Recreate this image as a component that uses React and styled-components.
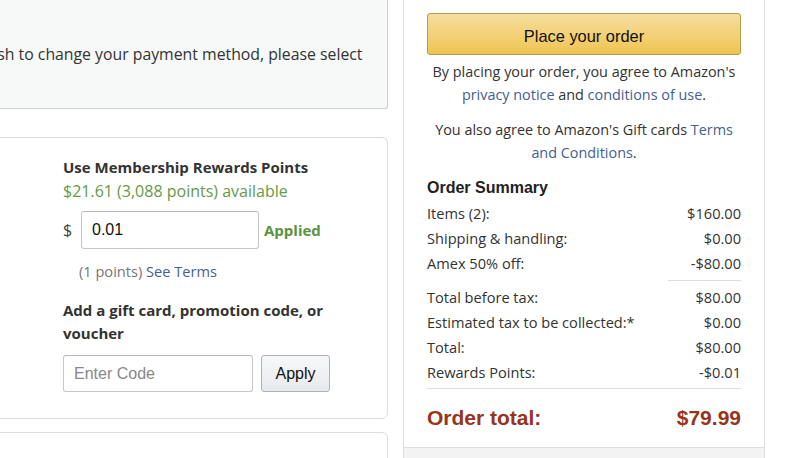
import styled, { createGlobalStyle } from 'styled-components';

const GlobalStyle = createGlobalStyle`
  html, body {
    margin: 0;
    padding: 0;
    background: #fff;
    overflow: hidden;
  }
  body {
    font-family: 'Open Sans', 'Liberation Sans', sans-serif;
    color: #333;
  }
`;

const Page = styled.div`
  display: flex;
  align-items: flex-start;
  gap: 15px;
  width: 785px;
  height: 458px;
  overflow: hidden;
`;

const LeftColumn = styled.div`
  display: flex;
  flex-direction: column;
  width: 448px;
  margin-left: -60px;
  flex-shrink: 0;
`;

const NoticeBox = styled.div`
  height: 108px;
  display: flex;
  align-items: center;
  background: #f7f8f8;
  border: 1px solid #c9d3d4;
  border-top: none;
  border-radius: 0 0 3px 3px;
  font-size: 15.8px;
  color: #333;
  text-indent: -5px;
  white-space: nowrap;
  overflow: hidden;
  margin-bottom: 28px;
`;

const Card = styled.div`
  border: 1px solid #dddddd;
  border-radius: 6px;
  padding: ${p => p.$pad || '18px 0 26px 122px'};
  min-height: ${p => p.$min || 0}px;
  margin-bottom: 13px;
`;

const Section = styled.div`
  width: 280px;
  display: flex;
  flex-direction: column;
`;

const Heading = styled.div`
  font-size: 15px;
  font-weight: 700;
  line-height: 23px;
  color: #333;
`;

const Available = styled.div`
  font-size: 16px;
  line-height: 24px;
  color: #649a48;
`;

const AmountRow = styled.div`
  display: flex;
  align-items: center;
  margin-top: 8px;
`;

const Dollar = styled.span`
  font-size: 16px;
  color: #444;
  width: 18px;
`;

const TextInput = styled.input`
  box-sizing: border-box;
  width: ${p => p.$w}px;
  height: ${p => p.$h}px;
  border: 1px solid #c6c6c6;
  border-top-color: #b8b8b8;
  border-radius: 3px;
  padding: 0 10px;
  font-family: 'Liberation Sans', Arial, sans-serif;
  font-size: 16px;
  color: #111;
  outline: none;
  &::placeholder {
    color: #888;
  }
`;

const Applied = styled.span`
  margin-left: 5px;
  font-size: 15px;
  font-weight: 700;
  color: #5b9340;
`;

const Note = styled.div`
  margin: 11px 0 0 16px;
  font-size: 14.6px;
  line-height: 22px;
  color: #767676;
`;

const Link = styled.a`
  color: #44608f;
  text-decoration: none;
`;

const GiftHeading = styled(Heading)`
  margin-top: 17px;
`;

const CodeRow = styled.div`
  display: flex;
  gap: 8px;
  margin-top: 10px;
`;

const GrayButton = styled.button`
  width: 69px;
  height: 37px;
  border: 1px solid #adb1b8;
  border-radius: 3px;
  background: linear-gradient(to bottom, #f7f8fa, #e7e9ec);
  font-family: 'Liberation Sans', Arial, sans-serif;
  font-size: 16px;
  color: #111;
  padding: 0;
`;

const SidePanel = styled.div`
  width: 360px;
  height: 470px;
  border-left: 1px solid #dddddd;
  border-right: 1px solid #dddddd;
  display: flex;
  flex-direction: column;
  flex-shrink: 0;
`;

const PanelBody = styled.div`
  padding: 13px 23px 14px 23px;
  display: flex;
  flex-direction: column;
`;

const PanelFoot = styled.div`
  flex: 1;
  border-top: 1px solid #dddddd;
  background: #f3f3f3;
`;

const OrderButton = styled.button`
  height: 42px;
  width: 100%;
  border: 1px solid #b99a48;
  border-radius: 3px;
  background: linear-gradient(to bottom, #f7dea0, #efc450);
  font-family: 'Liberation Sans', Arial, sans-serif;
  font-size: 16.4px;
  color: #111;
  padding: 5px 0 0;
`;

const Legal = styled.p`
  margin: ${p => p.$mt}px 0 0;
  font-size: 14.4px;
  line-height: 22.5px;
  text-align: center;
  color: #333;
`;

const SummaryTitle = styled.div`
  margin-top: 13px;
  font-family: 'Liberation Sans', Arial, sans-serif;
  font-size: 16px;
  font-weight: 700;
  line-height: 22px;
  color: #222;
`;

const Rows = styled.div`
  margin-top: 2px;
  display: flex;
  flex-direction: column;
`;

const Row = styled.div`
  display: flex;
  justify-content: space-between;
  font-size: 14.6px;
  line-height: 25px;
  color: #333;
`;

const Divider = styled.div`
  height: 1px;
  background: #dddddd;
  align-self: flex-end;
  width: ${p => p.$w || '100%'};
  margin: ${p => p.$m || '4px 0'};
`;

const TotalRow = styled.div`
  display: flex;
  justify-content: space-between;
  font-family: 'Liberation Sans', Arial, sans-serif;
  font-size: 21px;
  font-weight: 700;
  line-height: 30px;
  color: #98341b;
`;

const summaryTop = [
  ['Items (2):', '$160.00'],
  ['Shipping & handling:', '$0.00'],
  ['Amex 50% off:', '-$80.00'],
];

const summaryBottom = [
  ['Total before tax:', '$80.00'],
  ['Estimated tax to be collected:*', '$0.00'],
  ['Total:', '$80.00'],
  ['Rewards Points:', '-$0.01'],
];

export default function App() {
  return (
    <>
      <GlobalStyle />
      <Page>
        <LeftColumn>
          <NoticeBox>If you wish to change your payment method, please select</NoticeBox>
          <Card>
            <Section>
              <Heading>Use Membership Rewards Points</Heading>
              <Available>$21.61 (3,088 points) available</Available>
              <AmountRow>
                <Dollar>$</Dollar>
                <TextInput $w={178} $h={38} defaultValue="0.01" />
                <Applied>Applied</Applied>
              </AmountRow>
              <Note>
                (1 points) <Link href="#">See Terms</Link>
              </Note>
              <GiftHeading>Add a gift card, promotion code, or voucher</GiftHeading>
              <CodeRow>
                <TextInput $w={190} $h={37} placeholder="Enter Code" />
                <GrayButton>Apply</GrayButton>
              </CodeRow>
            </Section>
          </Card>
          <Card $pad="0" $min={80} />
        </LeftColumn>

        <SidePanel>
          <PanelBody>
            <OrderButton>Place your order</OrderButton>
            <Legal $mt={6}>
              By placing your order, you agree to Amazon's{' '}
              <Link href="#">privacy notice</Link> and <Link href="#">conditions of use</Link>.
            </Legal>
            <Legal $mt={13}>
              You also agree to Amazon's Gift cards <Link href="#">Terms and Conditions</Link>.
            </Legal>
            <SummaryTitle>Order Summary</SummaryTitle>
            <Rows>
              {summaryTop.map(([label, value]) => (
                <Row key={label}>
                  <span>{label}</span>
                  <span>{value}</span>
                </Row>
              ))}
              <Divider $w="73px" />
              {summaryBottom.map(([label, value]) => (
                <Row key={label}>
                  <span>{label}</span>
                  <span>{value}</span>
                </Row>
              ))}
              <Divider $m="3px 0 14px" />
              <TotalRow>
                <span>Order total:</span>
                <span>$79.99</span>
              </TotalRow>
            </Rows>
          </PanelBody>
          <PanelFoot />
        </SidePanel>
      </Page>
    </>
  );
}
